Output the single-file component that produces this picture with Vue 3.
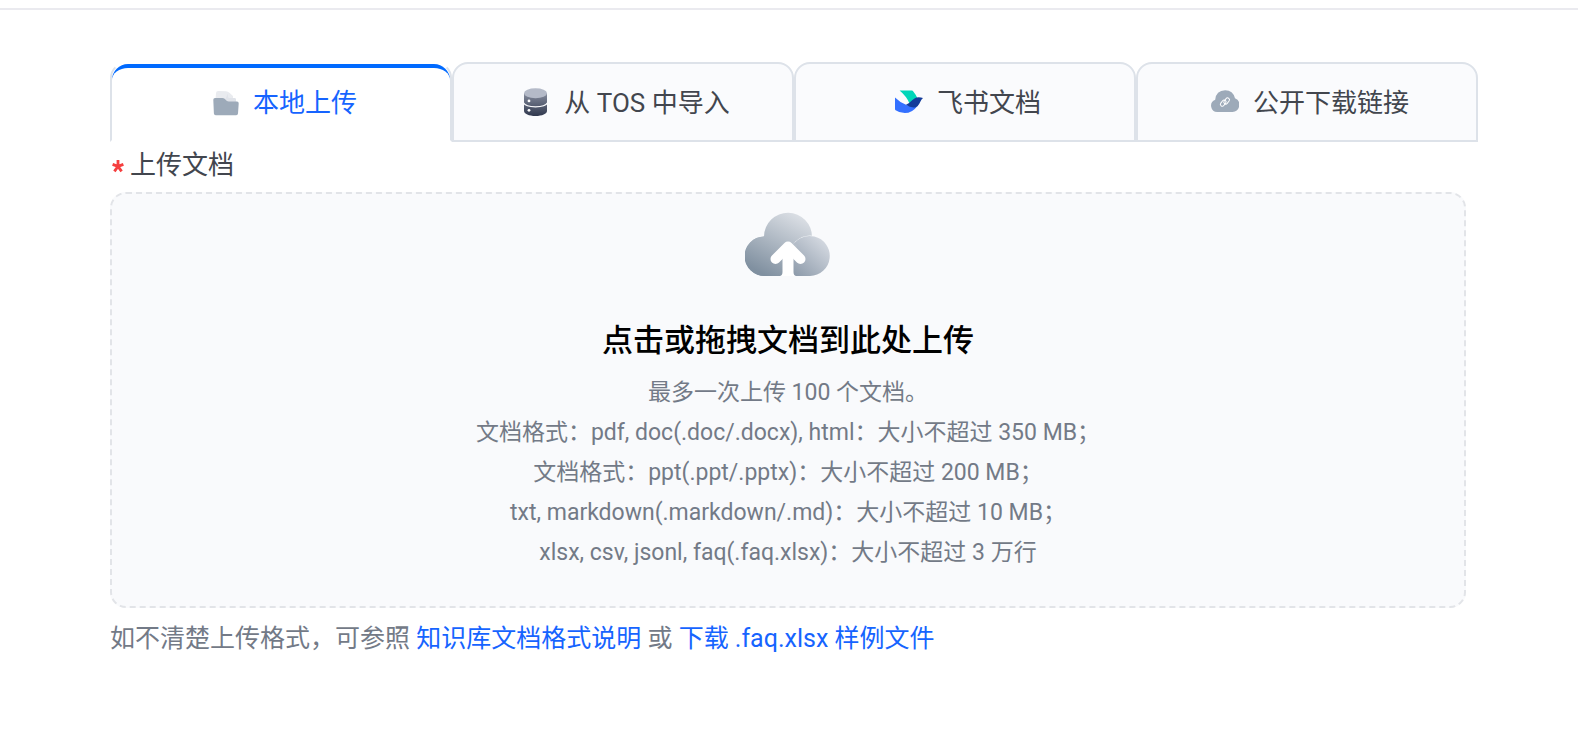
<script setup>
import { ref } from 'vue'

const tabs = [
  { id: 'local', label: '本地上传' },
  { id: 'tos', label: '从 TOS 中导入' },
  { id: 'feishu', label: '飞书文档' },
  { id: 'link', label: '公开下载链接' },
]
const active = ref('local')

const hints = [
  '最多一次上传 100 个文档。',
  '文档格式：pdf, doc(.doc/.docx), html：大小不超过 350 MB；',
  '文档格式：ppt(.ppt/.pptx)：大小不超过 200 MB；',
  'txt, markdown(.markdown/.md)：大小不超过 10 MB；',
  'xlsx, csv, jsonl, faq(.faq.xlsx)：大小不超过 3 万行',
]
</script>

<template>
  <div class="page">
    <header class="topline"></header>
    <main class="content">
      <div class="tabs" role="tablist">
        <button
          v-for="tab in tabs"
          :key="tab.id"
          type="button"
          role="tab"
          class="tab"
          :class="{ active: active === tab.id }"
          :aria-selected="active === tab.id"
          @click="active = tab.id"
        >
          <svg v-if="tab.id === 'local'" class="tab-icon" viewBox="0 0 28 28" aria-hidden="true">
            <path d="M5 5.2Q5 3 7.2 3L15 3.3Q17 3.5 18.4 4.8L22 8V18H4Z" fill="#e9ebef" />
            <path d="M17 5.5V8.8Q17 10 18.5 10H24Q25 10 25 11.5V16H12Z" fill="#e0e3e9" />
            <path d="M2.3 11.8Q2.3 10 4 10H11.5Q12.7 10 13.6 10.8L15.6 12.8Q16.5 13.6 17.8 13.6H26Q27.8 13.6 27.7 15.4L27 25.6Q26.9 27.3 25.2 27.3H4.7Q3 27.3 2.9 25.6Z" fill="#9daab9" />
          </svg>
          <svg v-else-if="tab.id === 'tos'" class="tab-icon" viewBox="0 0 28 28" aria-hidden="true">
            <defs>
              <linearGradient id="dbBody" x1="0" y1="0" x2="0" y2="1">
                <stop offset="0" stop-color="#858c9d" />
                <stop offset="1" stop-color="#30384e" />
              </linearGradient>
            </defs>
            <path d="M2 5V23C2 25.8 7 28 13.5 28S25 25.8 25 23V5Z" fill="url(#dbBody)" />
            <ellipse cx="13.5" cy="5.2" rx="11.5" ry="5" fill="#b4bac8" />
            <path d="M1.5 14.8C3 17.8 8 18.8 13.5 18.8S24 17.8 25.5 14.8" fill="none" stroke="#fafbfd" stroke-width="1.2" />
            <circle cx="7" cy="12.9" r="1.4" fill="#fff" />
            <circle cx="7" cy="22.3" r="1.4" fill="#fff" />
          </svg>
          <svg v-else-if="tab.id === 'feishu'" class="tab-icon" viewBox="0 0 28 28" aria-hidden="true">
            <path d="M4.6 2.6H16.8Q17.8 2.6 18.3 3.4Q20.8 6.4 22.3 10L15 16.4Q11.5 8.2 4.6 2.6Z" fill="#00d6b9" />
            <path d="M0 9.4Q5.2 14.6 11.6 17Q17 19.2 22 18.4Q17.2 25 9.8 25Q4.5 25 .6 22.2Q0 21.8 0 21Z" fill="#3370ff" />
            <path d="M11 16.8Q14 15.6 16.3 13Q19.8 9.2 23.6 9.2Q26 9.2 28 10Q26.2 11.6 25.2 14Q22.8 19.8 18.6 19.5Q14.6 19.2 11 16.8Z" fill="#133c9a" />
          </svg>
          <svg v-else class="tab-icon" viewBox="0 0 28 28" aria-hidden="true">
            <path d="M6.6 24A6.3 6.3 0 0 1 4.2 11.8Q5 2.5 14.2 2.3Q22 2.5 24 10.2A7.2 7.2 0 0 1 21.5 24Z" fill="#9daab9" />
            <g fill="none" stroke="#fff" stroke-width="1" transform="rotate(-52 14 14)">
              <rect x="8.6" y="11.4" width="6.8" height="3.8" rx="1.9" />
              <rect x="12.4" y="12.8" width="6.8" height="3.8" rx="1.9" />
            </g>
          </svg>
          <span class="tab-text">{{ tab.label }}</span>
        </button>
      </div>

      <label class="field-label" for="document-file">
        <svg class="required" viewBox="0 0 12 14" aria-hidden="true">
          <path d="M6 7.4V1M6 7.4L.6 5.4M6 7.4L11.4 5.4M6 7.4L2.4 12.4M6 7.4L9.6 12.4" fill="none" stroke="#f53f3f" stroke-width="2.8" />
        </svg>
        <span>上传文档</span>
      </label>

      <label class="dropzone">
        <input id="document-file" class="file-input" type="file" multiple />
        <svg class="cloud" viewBox="0 0 86 64" aria-hidden="true">
          <defs>
            <linearGradient id="cloudBack" gradientUnits="userSpaceOnUse" x1="54" y1="4" x2="22" y2="64">
              <stop offset="0" stop-color="#dadee4" />
              <stop offset="1" stop-color="#8090a0" />
            </linearGradient>
            <linearGradient id="cloudFront" gradientUnits="userSpaceOnUse" x1="78" y1="28" x2="46" y2="64">
              <stop offset="0" stop-color="#d3d8e0" />
              <stop offset="1" stop-color="#8997a7" />
            </linearGradient>
          </defs>
          <path d="M20 64A20 19.8 0 0 1 19 24.4A24 24 0 1 1 67 25V64Z" fill="url(#cloudBack)" />
          <path d="M0 44A19.8 19.8 0 0 1 19 24.4H30V64H20A20 20 0 0 1 0 44Z" fill="url(#cloudBack)" />
          <circle cx="65" cy="44" r="20.5" fill="#f9fafc" />
          <path d="M46 64V37A20 20 0 1 1 65 64Z" fill="url(#cloudFront)" />
          <path d="M43 30L52 33L45 64H36V36Z" fill="url(#cloudBack)" />
          <path d="M30.5 47L43 34.5L55.5 47" fill="none" stroke="#fff" stroke-width="10" stroke-linecap="round" stroke-linejoin="round" />
          <path d="M37.5 36H48.5V60Q48.5 63.5 51 64H35Q37.5 63.5 37.5 60Z" fill="#fff" />
        </svg>
        <span class="title">点击或拖拽文档到此处上传</span>
        <span v-for="hint in hints" :key="hint" class="hint">{{ hint }}</span>
      </label>

      <p class="footnote">
        如不清楚上传格式，可参照 <a href="#format">知识库文档格式说明</a> 或 <a href="#sample">下载 .faq.xlsx 样例文件</a>
      </p>
    </main>
  </div>
</template>

<style>
body {
  background: #fff;
}
</style>

<style scoped>
.page {
  font-family: Roboto, "Noto Sans CJK SC", sans-serif;
  color: #42464e;
}
.topline {
  padding-top: 8px;
  border-bottom: 2px solid #eaeaef;
}
.content {
  padding: 52px 100px 48px 110px;
}
.tabs {
  display: grid;
  grid-template-columns: repeat(4, 1fr);
}
.tab {
  position: relative;
  display: flex;
  align-items: center;
  justify-content: center;
  gap: 14px;
  box-sizing: border-box;
  height: 80px;
  margin: 0;
  padding: 0 0 0 6px;
  border: 2px solid #dde2e9;
  border-radius: 16px 16px 0 0;
  background: #fafbfd;
  color: #42464e;
  font: inherit;
  font-size: 26px;
  line-height: 40px;
  white-space: nowrap;
  cursor: pointer;
}
.tab.active {
  border-top-color: transparent;
  border-bottom-color: transparent;
  background: #fff;
  color: #1664ff;
}
.tab.active::before {
  content: "";
  position: absolute;
  inset: 0;
  border-top: 4px solid #006aff;
  border-radius: 16px 16px 0 0;
}
.tab-icon {
  flex: none;
  width: 28px;
  height: 28px;
}
.tab-text {
  padding-top: 2px;
}
.field-label {
  display: flex;
  align-items: center;
  gap: 6px;
  padding: 3px 0 7px 2px;
  font-size: 26px;
  line-height: 40px;
}
.required {
  width: 12px;
  height: 14px;
  margin-top: 2px;
}
.dropzone {
  position: relative;
  display: flex;
  flex-direction: column;
  align-items: center;
  margin-right: 12px;
  padding: 18px 16px 33px;
  border: 2px dashed #e2e4e8;
  border-radius: 16px;
  background: #f9fafc;
  text-align: center;
  cursor: pointer;
}
.file-input {
  position: absolute;
  width: 1px;
  height: 1px;
  opacity: 0;
}
.cloud {
  width: 86px;
  height: 64px;
}
.title {
  margin: 41px 0 8px;
  color: #000;
  font-size: 31px;
  font-weight: 500;
  line-height: 48px;
}
.hint {
  color: #737a87;
  font-size: 23px;
  line-height: 40px;
}
.footnote {
  margin: 11px 0 0;
  color: #737a87;
  font-size: 25px;
  line-height: 40px;
}
.footnote a {
  color: #1664ff;
  text-decoration: none;
}
</style>
